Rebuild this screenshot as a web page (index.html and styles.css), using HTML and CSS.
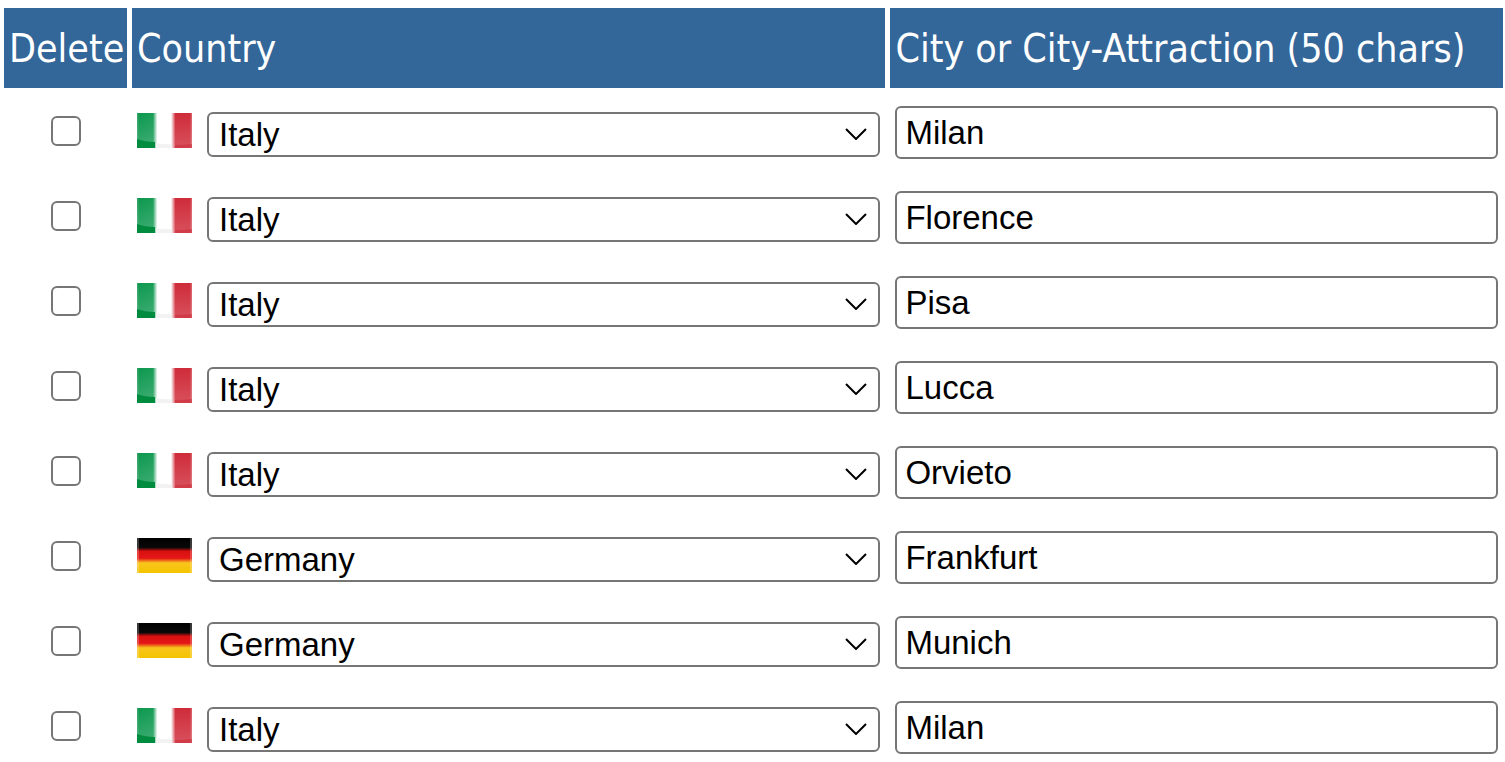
FILE: index.html
```html
<!DOCTYPE html>
<html lang="en">
<head>
<meta charset="utf-8">
<meta name="viewport" content="width=device-width, initial-scale=1">
<title>Cities</title>
<link rel="stylesheet" href="styles.css">
</head>
<body>
<svg class="defs" aria-hidden="true">
  <defs>
    <linearGradient id="it-bands">
      <stop offset="0" stop-color="#3fa56b"/><stop offset=".04" stop-color="#0d984f"/>
      <stop offset=".29" stop-color="#179c56"/><stop offset=".37" stop-color="#fff"/>
      <stop offset=".62" stop-color="#fff"/><stop offset=".7" stop-color="#cf2b39"/>
      <stop offset=".96" stop-color="#cf2b39"/><stop offset="1" stop-color="#dc6972"/>
    </linearGradient>
    <linearGradient id="it-shine" x2="0" y2="1">
      <stop offset="0" stop-color="#fff" stop-opacity="0"/><stop offset="1" stop-color="#fff" stop-opacity=".18"/>
    </linearGradient>
    <linearGradient id="de-bands" x2="0" y2="1">
      <stop offset="0" stop-color="#000"/><stop offset=".27" stop-color="#080808"/>
      <stop offset=".38" stop-color="#d9100f"/><stop offset=".58" stop-color="#e51718"/>
      <stop offset=".71" stop-color="#f8c51c"/><stop offset="1" stop-color="#f4c400"/>
    </linearGradient>
    <symbol id="italy" viewBox="0 0 55 35">
      <path fill="url(#it-bands)" d="M0 0h55v35H0z"/>
      <path fill="url(#it-shine)" d="M0 0h55v35H0z"/>
      <path fill="#008c3e" d="M0 26q8 3 18 3v6H0z"/>
      <path fill="#f2f2f2" d="M19 30q8 2 16 1v4H19z"/>
      <path fill="#cb2835" fill-opacity=".5" d="M38 32q8 0 17-1v4H38z"/>
    </symbol>
    <symbol id="germany" viewBox="0 0 55 35">
      <path fill="url(#de-bands)" d="M0 0h55v35H0z"/>
      <path fill="#fff" fill-opacity=".22" d="M0 0h2v35H0zM53 0h2v35h-2z"/>
    </symbol>
    <symbol id="chevron" viewBox="0 0 22 12">
      <path d="M1 1l10 10L21 1" fill="none" stroke="#000" stroke-width="2"/>
    </symbol>
  </defs>
</svg>
<table class="cities">
  <thead>
    <tr><th class="col-delete" scope="col">Delete</th><th class="col-country" scope="col">Country</th><th class="col-city" scope="col">City or City-Attraction (50 chars)</th></tr>
  </thead>
  <tbody id="rows"></tbody>
</table>
<script src="rows.js"></script>
</body>
</html>
```
FILE: styles.css
```css
body {
  margin: 3px -3px 0 -1px;
  background: #fff;
  color: #000;
  font-family: "Liberation Sans", Arial, sans-serif;
}

html {
  overflow-x: hidden;
}

.defs {
  position: absolute;
  width: 0;
  height: 0;
}

.cities {
  width: 100%;
  table-layout: fixed;
  border-collapse: separate;
  border-spacing: 5px;
}

th,
td {
  box-sizing: border-box;
  height: 80px;
}

th {
  padding: 2px 5px 0;
  background: #336699;
  color: #fff;
  font-family: Tahoma, "DejaVu Sans Condensed", "DejaVu Sans", sans-serif;
  font-size: 39px;
  font-weight: 400;
  line-height: 48px;
  text-align: left;
  white-space: nowrap;
}

.col-delete {
  width: 123px;
}

.col-country {
  width: 50.6%;
}

td {
  padding: 0;
  vertical-align: top;
}

tr:last-child td {
  height: 68px;
}

.delete-cell {
  padding-top: 23px;
}

.check {
  appearance: none;
  display: block;
  width: 30px;
  height: 30px;
  margin: 0 auto;
  border: 2px solid #767676;
  border-radius: 6px;
  background: #fff;
}

.check:checked {
  background: #336699;
}

.country-cell {
  padding: 19px 5px 0;
}

.country {
  display: flex;
  gap: 15px;
}

.flag {
  flex: none;
  width: 55px;
  height: 35px;
  margin-top: 1px;
}

.picker {
  position: relative;
  flex: 1;
}

.select,
.city {
  box-sizing: border-box;
  display: block;
  width: 100%;
  border: 2px solid #767676;
  border-radius: 6px;
  background: #fff;
  color: #000;
  font: 33px "Liberation Sans", Arial, sans-serif;
}

.select {
  appearance: none;
  height: 45px;
  padding: 0 40px 0 10px;
}

.chevron {
  position: absolute;
  top: 16px;
  right: 13px;
  width: 22px;
  height: 12px;
  pointer-events: none;
}

.city-cell {
  padding: 13px 5px 0;
}

.city {
  height: 53px;
  padding: 0 8px;
}
```
FILE: rows.js
```js
const entries = [
  ["Italy", "Milan"], ["Italy", "Florence"], ["Italy", "Pisa"], ["Italy", "Lucca"],
  ["Italy", "Orvieto"], ["Germany", "Frankfurt"], ["Germany", "Munich"], ["Italy", "Milan"]
];

document.getElementById("rows").innerHTML = entries.map(([country, city]) => `
  <tr>
    <td class="delete-cell"><input class="check" type="checkbox" aria-label="Delete ${city}"></td>
    <td class="country-cell"><div class="country">
      <svg class="flag" aria-hidden="true"><use href="#${country.toLowerCase()}"/></svg>
      <div class="picker">
        <select class="select" aria-label="Country">
          ${["Germany", "Italy"].map(c => `<option${c === country ? " selected" : ""}>${c}</option>`).join("")}
        </select>
        <svg class="chevron" aria-hidden="true"><use href="#chevron"/></svg>
      </div>
    </div></td>
    <td class="city-cell"><input class="city" type="text" maxlength="50" aria-label="City or City-Attraction" value="${city}"></td>
  </tr>`).join("");
```
